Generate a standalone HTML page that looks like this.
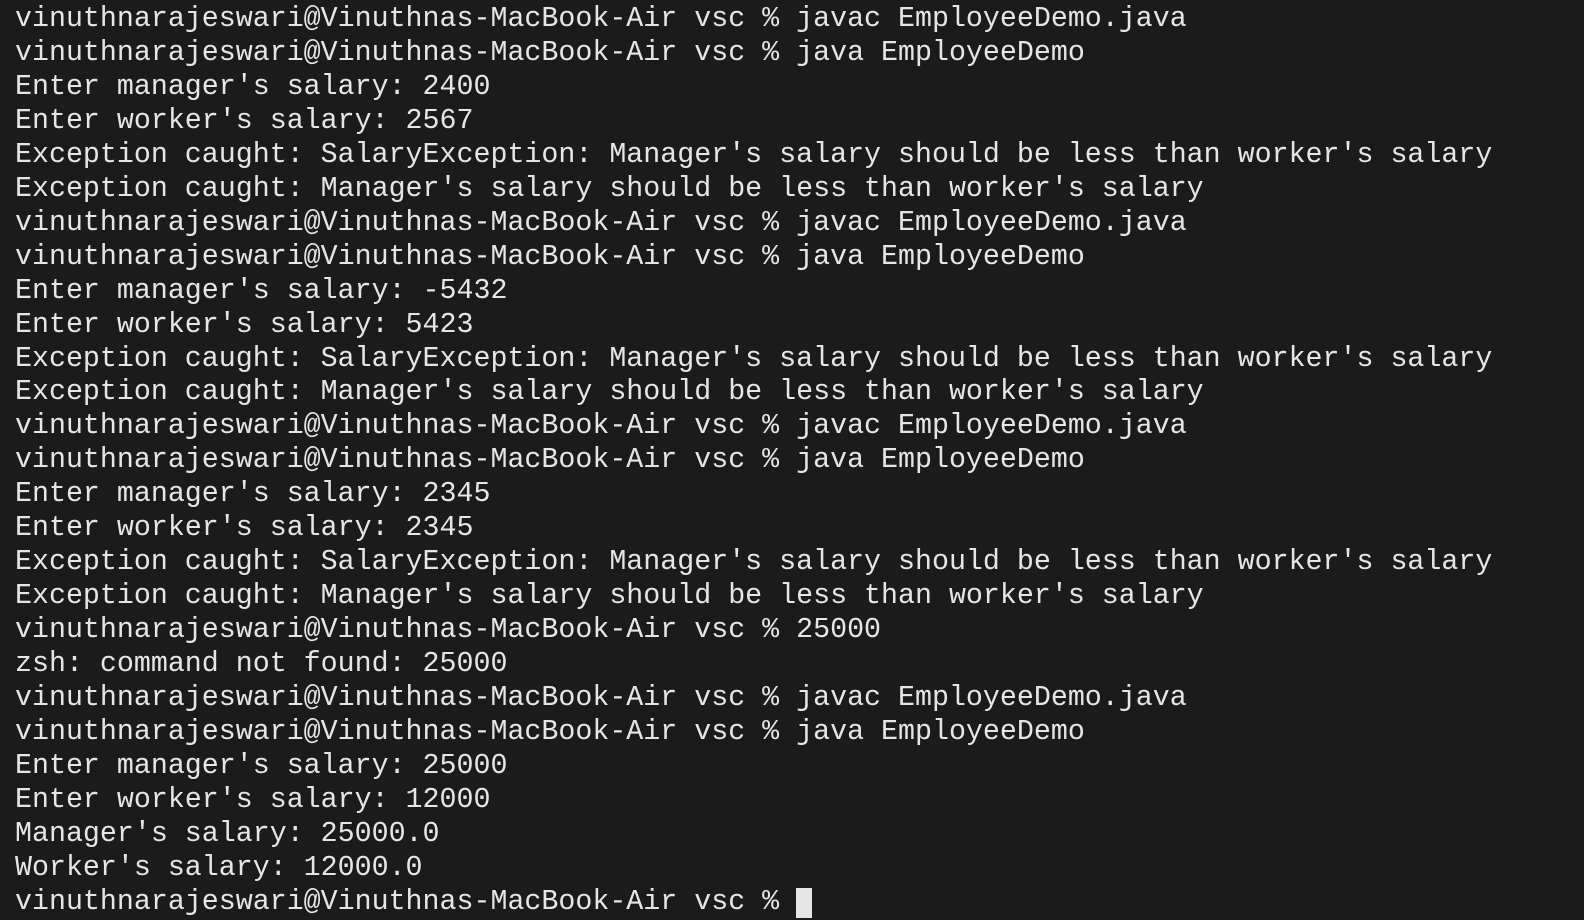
<!DOCTYPE html>
<html><head><meta charset="utf-8"><style>
html,body{margin:0;padding:0;background:#1b1b1b;width:1584px;height:892px;overflow:hidden}
pre{margin:0;position:absolute;left:15px;top:3px;font-family:"Liberation Mono",monospace;font-size:28.3px;line-height:33.96px;color:#e6e6e6;white-space:pre}
.cur{display:inline-block;width:16px;height:30px;background:#e6e6e6;vertical-align:top;margin-top:2px}
</style></head><body><pre>vinuthnarajeswari@Vinuthnas-MacBook-Air vsc % javac EmployeeDemo.java
vinuthnarajeswari@Vinuthnas-MacBook-Air vsc % java EmployeeDemo
Enter manager's salary: 2400
Enter worker's salary: 2567
Exception caught: SalaryException: Manager's salary should be less than worker's salary
Exception caught: Manager's salary should be less than worker's salary
vinuthnarajeswari@Vinuthnas-MacBook-Air vsc % javac EmployeeDemo.java
vinuthnarajeswari@Vinuthnas-MacBook-Air vsc % java EmployeeDemo
Enter manager's salary: -5432
Enter worker's salary: 5423
Exception caught: SalaryException: Manager's salary should be less than worker's salary
Exception caught: Manager's salary should be less than worker's salary
vinuthnarajeswari@Vinuthnas-MacBook-Air vsc % javac EmployeeDemo.java
vinuthnarajeswari@Vinuthnas-MacBook-Air vsc % java EmployeeDemo
Enter manager's salary: 2345
Enter worker's salary: 2345
Exception caught: SalaryException: Manager's salary should be less than worker's salary
Exception caught: Manager's salary should be less than worker's salary
vinuthnarajeswari@Vinuthnas-MacBook-Air vsc % 25000
zsh: command not found: 25000
vinuthnarajeswari@Vinuthnas-MacBook-Air vsc % javac EmployeeDemo.java
vinuthnarajeswari@Vinuthnas-MacBook-Air vsc % java EmployeeDemo
Enter manager's salary: 25000
Enter worker's salary: 12000
Manager's salary: 25000.0
Worker's salary: 12000.0
vinuthnarajeswari@Vinuthnas-MacBook-Air vsc % <span class="cur"></span></pre></body></html>
